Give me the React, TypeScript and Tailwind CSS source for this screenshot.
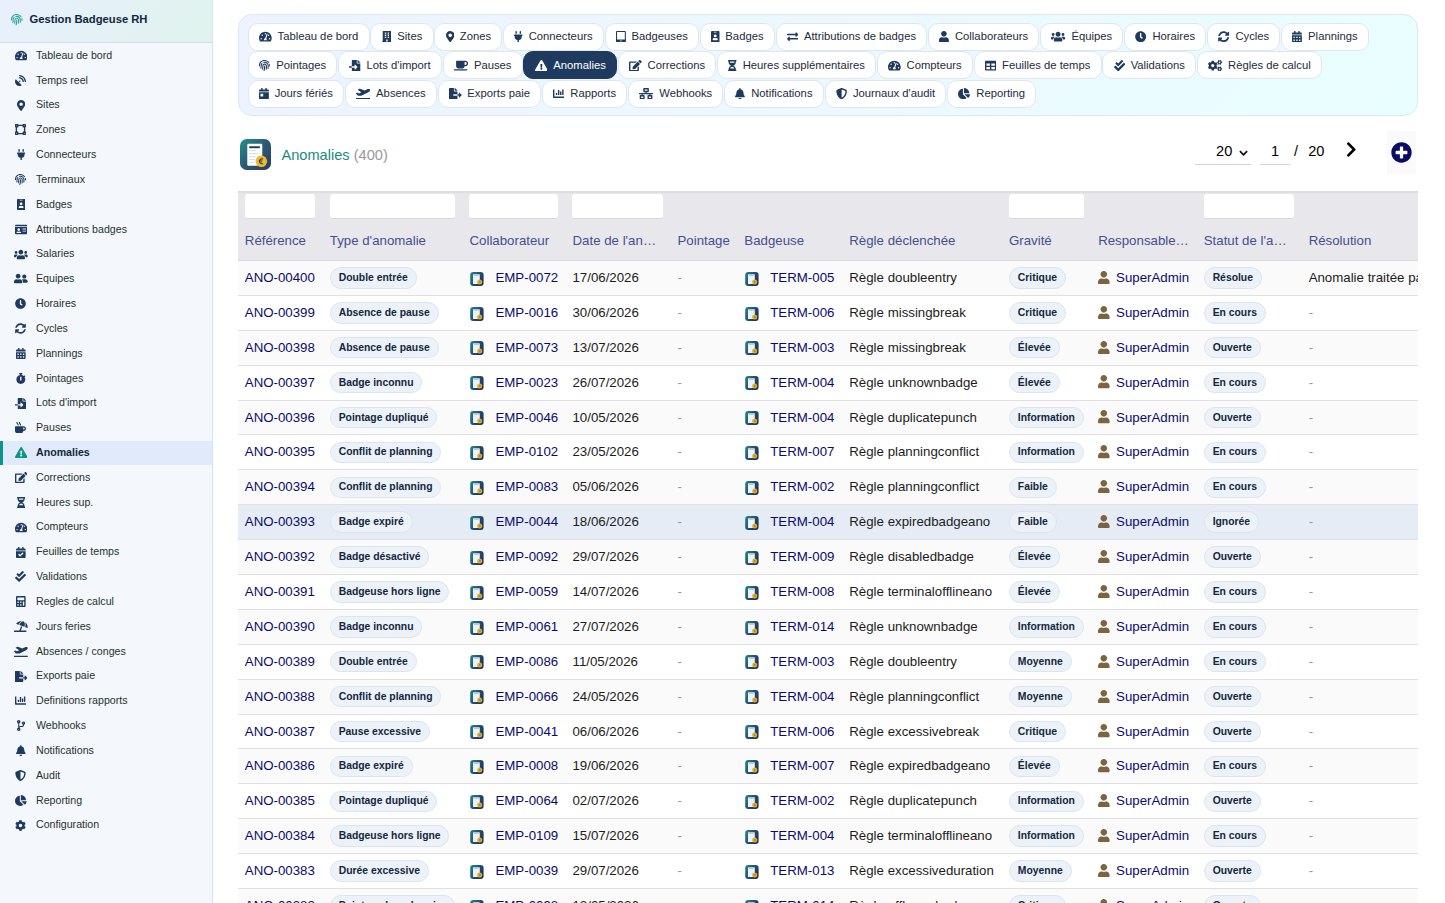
import React from 'react';
import type { IconType } from 'react-icons';
import {
  FaTachometerAlt, FaSatelliteDish, FaMapMarkerAlt, FaVectorSquare, FaPlug, FaFingerprint, FaIdBadge, FaIdCard,
  FaUsers, FaUserFriends, FaClock, FaSyncAlt, FaCalendarAlt, FaStopwatch, FaFileImport, FaMugHot,
  FaExclamationTriangle, FaEdit, FaHourglassHalf, FaCalendarCheck, FaCheckDouble, FaCalculator,
  FaUmbrellaBeach, FaPlaneDeparture, FaFileExport, FaChartBar, FaCodeBranch, FaBell, FaShieldAlt,
  FaChartPie, FaCog, FaBuilding, FaTabletAlt, FaExchangeAlt, FaUser, FaCoffee, FaTable, FaCogs,
  FaCalendarDay, FaNetworkWired, FaChevronRight, FaPlusCircle,
} from 'react-icons/fa';

type Entry = [IconType, string];

const sidebar: Entry[] = [
  [FaTachometerAlt, 'Tableau de bord'],
  [FaSatelliteDish, 'Temps reel'],
  [FaMapMarkerAlt, 'Sites'],
  [FaVectorSquare, 'Zones'],
  [FaPlug, 'Connecteurs'],
  [FaFingerprint, 'Terminaux'],
  [FaIdBadge, 'Badges'],
  [FaIdCard, 'Attributions badges'],
  [FaUsers, 'Salaries'],
  [FaUserFriends, 'Equipes'],
  [FaClock, 'Horaires'],
  [FaSyncAlt, 'Cycles'],
  [FaCalendarAlt, 'Plannings'],
  [FaStopwatch, 'Pointages'],
  [FaFileImport, "Lots d'import"],
  [FaMugHot, 'Pauses'],
  [FaExclamationTriangle, 'Anomalies'],
  [FaEdit, 'Corrections'],
  [FaHourglassHalf, 'Heures sup.'],
  [FaTachometerAlt, 'Compteurs'],
  [FaCalendarCheck, 'Feuilles de temps'],
  [FaCheckDouble, 'Validations'],
  [FaCalculator, 'Regles de calcul'],
  [FaUmbrellaBeach, 'Jours feries'],
  [FaPlaneDeparture, 'Absences / conges'],
  [FaFileExport, 'Exports paie'],
  [FaChartBar, 'Definitions rapports'],
  [FaCodeBranch, 'Webhooks'],
  [FaBell, 'Notifications'],
  [FaShieldAlt, 'Audit'],
  [FaChartPie, 'Reporting'],
  [FaCog, 'Configuration'],
];

const tabRows: Entry[][] = [
  [
    [FaTachometerAlt, 'Tableau de bord'],
    [FaBuilding, 'Sites'],
    [FaMapMarkerAlt, 'Zones'],
    [FaPlug, 'Connecteurs'],
    [FaTabletAlt, 'Badgeuses'],
    [FaIdBadge, 'Badges'],
    [FaExchangeAlt, 'Attributions de badges'],
    [FaUser, 'Collaborateurs'],
    [FaUsers, 'Équipes'],
    [FaClock, 'Horaires'],
    [FaSyncAlt, 'Cycles'],
    [FaCalendarAlt, 'Plannings'],
  ],
  [
    [FaFingerprint, 'Pointages'],
    [FaFileImport, "Lots d'import"],
    [FaCoffee, 'Pauses'],
    [FaExclamationTriangle, 'Anomalies'],
    [FaEdit, 'Corrections'],
    [FaHourglassHalf, 'Heures supplémentaires'],
    [FaTachometerAlt, 'Compteurs'],
    [FaTable, 'Feuilles de temps'],
    [FaCheckDouble, 'Validations'],
    [FaCogs, 'Règles de calcul'],
  ],
  [
    [FaCalendarDay, 'Jours fériés'],
    [FaPlaneDeparture, 'Absences'],
    [FaFileExport, 'Exports paie'],
    [FaChartBar, 'Rapports'],
    [FaNetworkWired, 'Webhooks'],
    [FaBell, 'Notifications'],
    [FaShieldAlt, "Journaux d'audit"],
    [FaChartPie, 'Reporting'],
  ],
];

// number, type, employee, date, terminal, rule, severity, status
type Row = [string, string, string, string, string, string, string, string];

const rows: Row[] = [
  ['00400', 'Double entrée', '0072', '17/06/2026', '005', 'doubleentry', 'Critique', 'Résolue'],
  ['00399', 'Absence de pause', '0016', '30/06/2026', '006', 'missingbreak', 'Critique', 'En cours'],
  ['00398', 'Absence de pause', '0073', '13/07/2026', '003', 'missingbreak', 'Élevée', 'Ouverte'],
  ['00397', 'Badge inconnu', '0023', '26/07/2026', '004', 'unknownbadge', 'Élevée', 'En cours'],
  ['00396', 'Pointage dupliqué', '0046', '10/05/2026', '004', 'duplicatepunch', 'Information', 'Ouverte'],
  ['00395', 'Conflit de planning', '0102', '23/05/2026', '007', 'planningconflict', 'Information', 'En cours'],
  ['00394', 'Conflit de planning', '0083', '05/06/2026', '002', 'planningconflict', 'Faible', 'En cours'],
  ['00393', 'Badge expiré', '0044', '18/06/2026', '004', 'expiredbadgeano', 'Faible', 'Ignorée'],
  ['00392', 'Badge désactivé', '0092', '29/07/2026', '009', 'disabledbadge', 'Élevée', 'Ouverte'],
  ['00391', 'Badgeuse hors ligne', '0059', '14/07/2026', '008', 'terminalofflineano', 'Élevée', 'En cours'],
  ['00390', 'Badge inconnu', '0061', '27/07/2026', '014', 'unknownbadge', 'Information', 'En cours'],
  ['00389', 'Double entrée', '0086', '11/05/2026', '003', 'doubleentry', 'Moyenne', 'En cours'],
  ['00388', 'Conflit de planning', '0066', '24/05/2026', '004', 'planningconflict', 'Moyenne', 'Ouverte'],
  ['00387', 'Pause excessive', '0041', '06/06/2026', '006', 'excessivebreak', 'Critique', 'Ouverte'],
  ['00386', 'Badge expiré', '0008', '19/06/2026', '007', 'expiredbadgeano', 'Élevée', 'En cours'],
  ['00385', 'Pointage dupliqué', '0064', '02/07/2026', '002', 'duplicatepunch', 'Information', 'Ouverte'],
  ['00384', 'Badgeuse hors ligne', '0109', '15/07/2026', '004', 'terminalofflineano', 'Information', 'En cours'],
  ['00383', 'Durée excessive', '0039', '29/07/2026', '013', 'excessiveduration', 'Moyenne', 'Ouverte'],
  ['00382', 'Pointage hors horaire', '0098', '12/05/2026', '014', 'offhoursbadge', 'Critique', 'Ouverte'],
];

const headers: { label: string; filter?: boolean; cut?: boolean }[] = [
  { label: 'Référence', filter: true },
  { label: "Type d'anomalie", filter: true },
  { label: 'Collaborateur', filter: true },
  { label: "Date de l'an", filter: true, cut: true },
  { label: 'Pointage' },
  { label: 'Badgeuse' },
  { label: 'Règle déclenchée' },
  { label: 'Gravité', filter: true },
  { label: 'Responsable', cut: true },
  { label: "Statut de l'a", filter: true, cut: true },
  { label: 'Résolution' },
];

const grid =
  'grid w-[1300px] grid-cols-[85px_139.7px_103px_105px_66.8px_105px_159.7px_89.2px_105.6px_104.9px_236px]';

// Font Awesome glyphs vary in width: keep the height fixed and derive the width from the glyph's view box.
function Icon({ icon, height, className = '' }: { icon: IconType; height: number; className?: string }) {
  const glyph = icon({}) as React.ReactElement<{ attr: { viewBox: string } }>;
  const [, , w, h] = glyph.props.attr.viewBox.split(' ').map(Number);
  return React.createElement(icon, {
    className: `shrink-0 ${className}`,
    style: { height, width: (height * w) / h },
  });
}

function Logo({ className }: { className: string }) {
  return (
    <svg viewBox="0 0 64 64" className={className}>
      <defs>
        <linearGradient id="logo" x1="0" y1="0" x2="1" y2="1">
          <stop offset="0" stopColor="#22908a" />
          <stop offset="0.5" stopColor="#2a5a72" />
          <stop offset="1" stopColor="#263c62" />
        </linearGradient>
      </defs>
      <rect width="64" height="64" rx="14" fill="url(#logo)" />
      <rect x="15" y="10" width="31" height="45" rx="2.500" fill="#fff" />
      <rect x="19" y="15" width="22" height="4" fill="#1e3a5f" />
      <path d="M19 24h14M19 30h18M19 36h13M19 42h12M19 48h10" stroke="#d5dce6" strokeWidth="2" />
      <circle cx="44" cy="46" r="12" fill="#efb92b" />
      <path d="M47.500 41.500a5 5 0 1 0 0 9" fill="none" stroke="#1e3a5f" strokeWidth="2.200" />
      <path d="M39 44.800h7.500M39 47.400h6.500" stroke="#1e3a5f" strokeWidth="1.300" />
    </svg>
  );
}

function MiniLogo() {
  return (
    <svg viewBox="0 0 14 14" className="mt-[1.500px] ml-[0.800px] h-[14px] w-[14px] shrink-0">
      <defs>
        <linearGradient id="mini" x1="0" y1="0" x2="1" y2="0.600">
          <stop offset="0" stopColor="#238a88" />
          <stop offset="0.500" stopColor="#20567a" />
          <stop offset="1" stopColor="#1c3358" />
        </linearGradient>
      </defs>
      <rect x="0.200" width="13.400" height="14" rx="3" fill="url(#mini)" />
      <rect x="3" y="2.200" width="6.800" height="9.800" rx="0.600" fill="#eef1f6" />
      <rect x="4" y="2.800" width="4.800" height="0.800" fill="#a3afc0" />
      <circle cx="9.700" cy="10" r="2.500" fill="#dcae2c" />
      <path d="M9.200 10h1.300" stroke="#6b5b32" strokeWidth="1" />
    </svg>
  );
}

function Tag({ text }: { text: string }) {
  return (
    <span className="inline-flex h-[21.500px] items-center rounded-full border border-[#dbe5f0] bg-[#edf2f8] px-[7.900px] text-[10.370px] leading-[12px] font-bold text-[#12263f]">
      {text}
    </span>
  );
}

function Cell({ children }: { children: React.ReactNode }) {
  return <div className="flex items-center px-[7.300px]">{children}</div>;
}

export default function App() {
  return (
    <div className="flex h-[903px] w-[1445px] overflow-hidden bg-white font-['Liberation_Sans',Arial,sans-serif]">
      <aside className="flex w-[213px] shrink-0 flex-col border-r border-[#d3e2f5] bg-[#f4f7fc]">
        <div className="flex h-[43px] shrink-0 items-center gap-[7px] border-b border-[#cfdff0] bg-linear-135 from-[#e8f0fd] to-[#dff3ec] pb-[3px] pl-[11px]">
          <Icon icon={FaFingerprint} height={11.5} className="mt-[1px] text-[#27a59a]" />
          <span className="text-[11.240px] font-bold whitespace-nowrap text-[#12263f]">Gestion Badgeuse RH</span>
        </div>
        <nav className="flex flex-col pt-[0.300px]">
          {sidebar.map(([icon, label]) => {
            const active = label === 'Anomalies';
            return (
              <a
                key={label}
                className={
                  active
                    ? 'flex h-[24.840px] items-center border-l-[3px] border-[#0d9488] bg-[#e1eafa] pl-[10.300px] font-bold text-[#12263f]'
                    : 'flex h-[24.840px] items-center border-l-[3px] border-transparent pl-[10.300px] text-[#26332c]'
                }
              >
                <span className={active ? 'flex w-[15px] justify-center text-[#0d9488]' : 'flex w-[15px] justify-center pb-[0.500px] text-[#1e3a5f]'}>
                  <Icon icon={icon} height={11} />
                </span>
                <span className="ml-[7.700px] text-[10.640px] whitespace-nowrap">{label}</span>
              </a>
            );
          })}
        </nav>
      </aside>

      <main className="flex w-[1205px] shrink-0 flex-col pt-[14px] pl-[24.500px]">
        <div className="flex h-[102px] shrink-0 flex-col gap-[0.500px] rounded-[14px] border border-[#dbe7f3] bg-linear-135 from-[#eef3ff] to-[#e9feff] px-[9.300px] pt-[7.800px]">
          {tabRows.map((row, i) => (
            <div key={i} className="flex gap-[0.830px]">
              {row.map(([icon, label]) => (
                <a
                  key={label}
                  className={
                    label === 'Anomalies'
                      ? 'flex h-[28px] items-center gap-[5.850px] rounded-[10px] border border-[#1e3a5f] bg-[#1e3a5f] px-[10.200px] pb-[1.200px] text-white'
                      : 'flex h-[28px] items-center gap-[5.850px] rounded-[10px] border border-[#dde7f4] bg-white px-[10.200px] pb-[1.200px] text-[#1c2b40]'
                  }
                >
                  <Icon
                    icon={icon}
                    height={11.3}
                    className={label === 'Anomalies' ? 'mt-[1px] text-white' : 'mt-[1px] text-[#1e3a5f]'}
                  />
                  <span className="text-[11.280px] leading-[14px] whitespace-nowrap">{label}</span>
                </a>
              ))}
            </div>
          ))}
        </div>

        <div className="flex h-[75px] shrink-0 items-center pl-[2.500px]">
          <Logo className="mt-[2px] h-[31px] w-[31px]" />
          <h1 className="mt-[5px] ml-[10.500px] text-[14.600px] text-[#1a8a85]">
            Anomalies <span className="text-[#999]">(400)</span>
          </h1>
          <div className="ml-auto flex items-center pr-[2px] text-[14.600px] text-black">
            <div className="mt-[-4px] flex h-[27px] w-[56px] items-center border-b border-[#d5d5d8] pt-[1px] pl-[21px]">
              20
              <svg viewBox="0 0 10 6" className="mt-[2px] ml-[6.500px] h-[6px] w-[9px]">
                <path d="M1 1l4 4 4-4" fill="none" stroke="#111" strokeWidth="2" />
              </svg>
            </div>
            <div className="mt-[-4px] ml-[9px] flex h-[27px] w-[30px] items-center justify-center border-b border-[#d5d5d8] pt-[1px]">1</div>
            <span className="mt-[-3px] ml-[4px]">/</span>
            <span className="mt-[-3px] ml-[10px]">20</span>
            <div className="mt-[-8px] ml-[22px]">
              <Icon icon={FaChevronRight} height={17} />
            </div>
            <div className="mt-[-2px] ml-[30px] flex h-[43px] w-[29px] items-center justify-center bg-[#fafafa]">
              <FaPlusCircle className="h-[21px] w-[21px] text-[#0a0a66]" />
            </div>
          </div>
        </div>

        <div className="w-[1180.500px] overflow-hidden text-[13.280px] whitespace-nowrap">
          <div className={`${grid} h-[70px] border-t-2 border-b border-t-[#dedee0] border-b-[#d9d9dc] bg-[#e8e8ec]`}>
            {headers.map((h) => (
              <div key={h.label} className="flex flex-col px-[7.300px] pt-[1px]">
                {h.filter ? (
                  <div className="h-[25px] rounded-[3px] border-b border-[#d9d9dc] bg-white" />
                ) : (
                  <div className="h-[25px]" />
                )}
                <div className="mt-[14px] leading-[16px] text-[#444f8e]">
                  {h.label}
                  {h.cut && <span className="text-[#55556a]">…</span>}
                </div>
              </div>
            ))}
          </div>
          {rows.map(([num, type, emp, date, term, rule, severity, status], i) => (
            <div
              key={num}
              className={`${grid} h-[34.900px] border-b border-[#e0e0e2] text-[#1c1c1c] ${
                i === 7 ? 'bg-[#e5ecf5]' : i % 2 === 0 ? 'bg-[#fafafa]' : 'bg-white'
              }`}
            >
              <Cell>
                <span className="text-[#0a0a6e]">ANO-{num}</span>
              </Cell>
              <Cell>
                <Tag text={type} />
              </Cell>
              <Cell>
                <MiniLogo />
                <span className="ml-[11.200px] text-[#0a0a6e]">EMP-{emp}</span>
              </Cell>
              <Cell>{date}</Cell>
              <Cell>
                <span className="text-[#999]">-</span>
              </Cell>
              <Cell>
                <MiniLogo />
                <span className="ml-[11.200px] text-[#0a0a6e]">TERM-{term}</span>
              </Cell>
              <Cell>Règle {rule}</Cell>
              <Cell>
                <Tag text={severity} />
              </Cell>
              <Cell>
                <Icon icon={FaUser} height={13.28} className="mb-[1px] text-[#7d6440]" />
                <span className="ml-[6.300px] text-[#0a0a6e]">SuperAdmin</span>
              </Cell>
              <Cell>
                <Tag text={status} />
              </Cell>
              <Cell>{i === 0 ? 'Anomalie traitée par le service RH' : <span className="text-[#999]">-</span>}</Cell>
            </div>
          ))}
        </div>
      </main>
    </div>
  );
}
